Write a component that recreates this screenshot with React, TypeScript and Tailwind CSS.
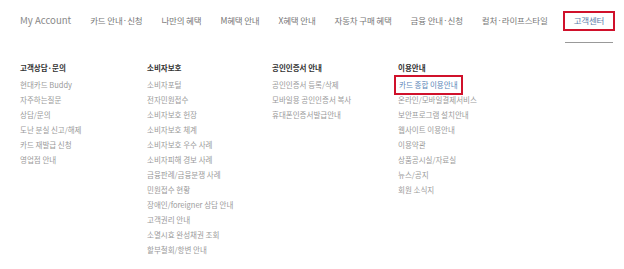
import React from "react";

const nav = [
  "My Account",
  "카드 안내·신청",
  "나만의 혜택",
  "M혜택 안내",
  "X혜택 안내",
  "자동차 구매 혜택",
  "금융 안내·신청",
  "컬처·라이프스타일",
];

const cols: { title: string; items: string[] }[] = [
  {
    title: "고객상담·문의",
    items: ["현대카드 Buddy", "자주하는질문", "상담/문의", "도난 분실 신고/해제", "카드 재발급 신청", "영업점 안내"],
  },
  {
    title: "소비자보호",
    items: [
      "소비자포털",
      "전자민원접수",
      "소비자보호 헌장",
      "소비자보호 체계",
      "소비자보호 우수 사례",
      "소비자피해 경보 사례",
      "금융판례/금융분쟁 사례",
      "민원접수 현황",
      "장애인/foreigner 상담 안내",
      "고객권리 안내",
      "소멸시효 완성채권 조회",
      "할부철회/항변 안내",
    ],
  },
  {
    title: "공인인증서 안내",
    items: ["공인인증서 등록/삭제", "모바일용 공인인증서 복사", "휴대폰인증서발급안내"],
  },
  {
    title: "이용안내",
    items: [
      "카드 종합 이용안내",
      "온라인/모바일결제서비스",
      "보안프로그램 설치안내",
      "웹사이트 이용안내",
      "이용약관",
      "상품공시실/자료실",
      "뉴스/공지",
      "회원 소식지",
    ],
  },
];

export default function App() {
  return (
    <div
      className="w-[624px] h-[269px] bg-white overflow-hidden"
      style={{ fontFamily: '"Noto Sans CJK KR", "Noto Sans", sans-serif' }}
    >
      <div className="flex items-center h-[41px] pl-[20px] gap-[19px] text-[8.5px] text-[#777] tracking-[-0.02em] whitespace-nowrap">
        {nav.map((n, i) => (
          <span key={i} className={"shrink-0 " + (i === 0 ? "text-[9.6px] tracking-normal text-[#888]" : "")}>
            {n}
          </span>
        ))}
        <div className="relative ml-[-4px] shrink-0">
          <div className="border-2 border-[#d0112b] h-[20px] px-[9px] flex items-center text-[8.5px] text-[#5a7aa8]">
            고객센터
          </div>
          <div className="absolute left-[2px] right-[2px] top-[31px] h-px bg-[#999]" />
        </div>
      </div>
      <div className="grid grid-cols-[127px_125px_126px_1fr] pl-[20px] pt-[20px] whitespace-nowrap">
        {cols.map((c, ci) => (
          <div key={ci} className="flex flex-col">
            <div className="text-[7.5px] font-bold text-[#333] leading-[14px] mb-[2px]">{c.title}</div>
            {c.items.map((it, ii) =>
              ci === 3 && ii === 0 ? (
                <div key={ii} className="h-[15px] flex items-center">
                  <span className="border-2 border-[#d0112b] ml-[-4px] px-[3px] h-[20px] flex items-center text-[7.5px] text-[#5b86b8]">
                    {it}
                  </span>
                </div>
              ) : (
                <div key={ii} className="h-[15px] leading-[15px] text-[7.5px] text-[#9a9a9a]">
                  {it}
                </div>
              )
            )}
          </div>
        ))}
      </div>
    </div>
  );
}
